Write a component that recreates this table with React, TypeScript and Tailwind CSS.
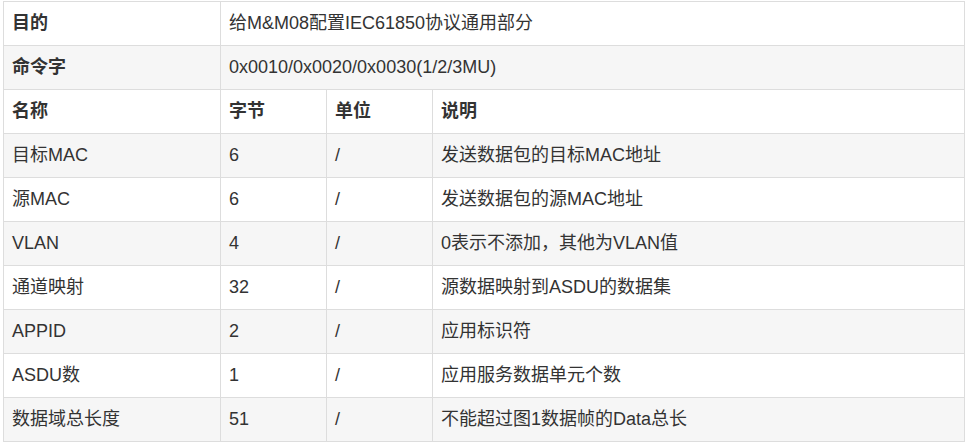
const rows = [
  { name: "目标MAC", bytes: "6", unit: "/", desc: "发送数据包的目标MAC地址" },
  { name: "源MAC", bytes: "6", unit: "/", desc: "发送数据包的源MAC地址" },
  { name: "VLAN", bytes: "4", unit: "/", desc: "0表示不添加，其他为VLAN值" },
  { name: "通道映射", bytes: "32", unit: "/", desc: "源数据映射到ASDU的数据集" },
  { name: "APPID", bytes: "2", unit: "/", desc: "应用标识符" },
  { name: "ASDU数", bytes: "1", unit: "/", desc: "应用服务数据单元个数" },
  { name: "数据域总长度", bytes: "51", unit: "/", desc: "不能超过图1数据帧的Data总长" },
];

const td = "h-[44px] border border-[#dddddd] px-2 align-middle";

export default function App() {
  return (
    <div className="bg-white pl-[3px] pt-[1px] text-[18px] text-[#333333] [font-family:'Liberation_Sans','Noto_Sans_CJK_SC',sans-serif]">
      <table className="w-[962px] table-fixed border-collapse">
        <colgroup>
          <col className="w-[217px]" />
          <col className="w-[106px]" />
          <col className="w-[106px]" />
          <col />
        </colgroup>
        <tbody>
          <tr className="bg-white">
            <td className={`${td} font-bold`}>目的</td>
            <td className={td} colSpan={3}>给M&amp;M08配置IEC61850协议通用部分</td>
          </tr>
          <tr className="bg-[#f6f6f6]">
            <td className={`${td} font-bold`}>命令字</td>
            <td className={td} colSpan={3}>0x0010/0x0020/0x0030(1/2/3MU)</td>
          </tr>
          <tr className="bg-white font-bold">
            <td className={td}>名称</td>
            <td className={td}>字节</td>
            <td className={td}>单位</td>
            <td className={td}>说明</td>
          </tr>
          {rows.map((r, i) => (
            <tr key={r.name} className={i % 2 === 0 ? "bg-[#f6f6f6]" : "bg-white"}>
              <td className={td}>{r.name}</td>
              <td className={td}>{r.bytes}</td>
              <td className={td}>{r.unit}</td>
              <td className={td}>{r.desc}</td>
            </tr>
          ))}
        </tbody>
      </table>
    </div>
  );
}
